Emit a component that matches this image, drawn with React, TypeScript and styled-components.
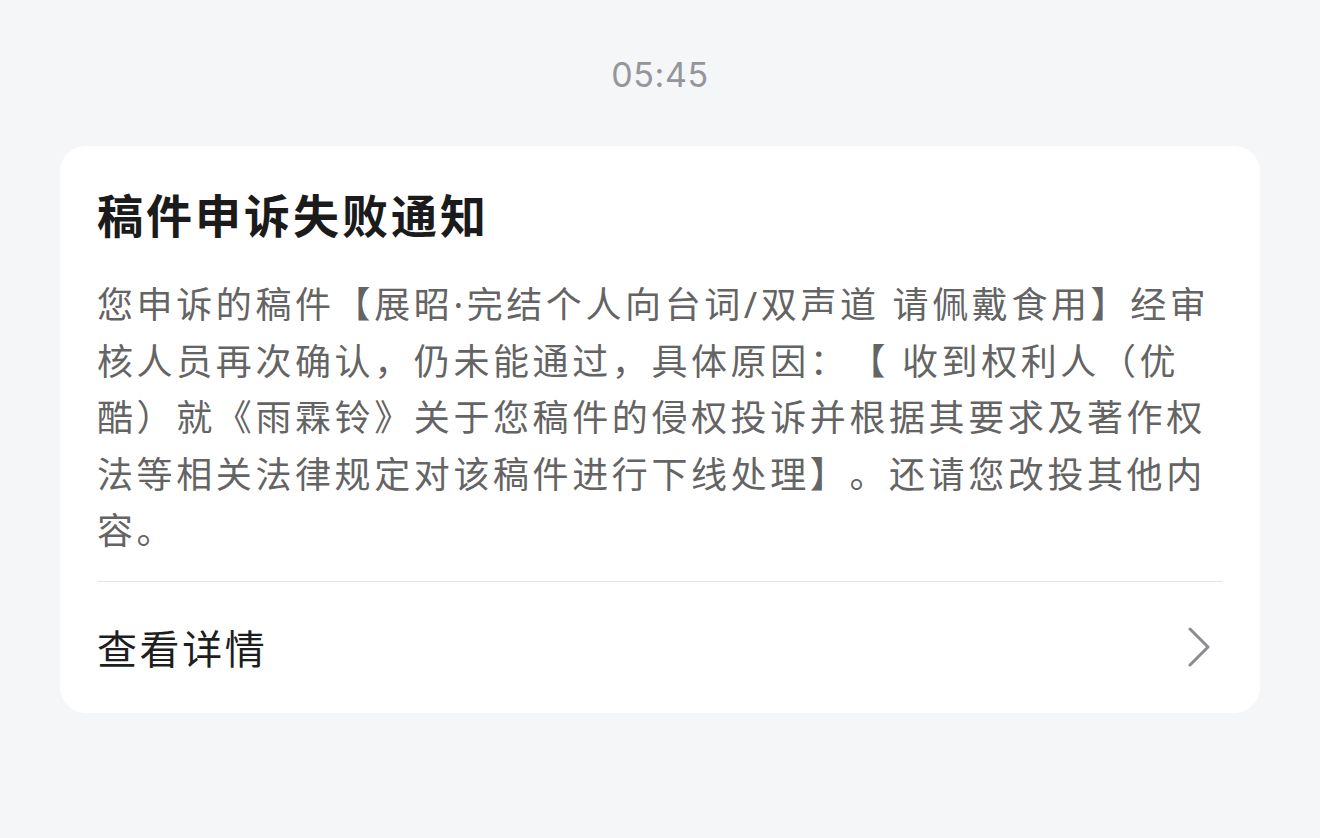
import React from "react";
import styled, { createGlobalStyle } from "styled-components";

const GlobalStyle = createGlobalStyle`
  html, body {
    margin: 0;
    padding: 0;
    background: #f5f6f8;
  }
  body {
    font-family: "Noto Sans", "Noto Sans CJK SC", sans-serif;
    text-spacing-trim: space-all;
  }
`;

const Page = styled.div`
  width: 1320px;
  height: 838px;
  box-sizing: border-box;
  padding: 0 60px;
  display: flex;
  flex-direction: column;
  align-items: stretch;
  background: #f5f6f8;
`;

const Time = styled.div`
  height: 146px;
  box-sizing: border-box;
  padding-top: 52px;
  text-align: center;
  font-family: Inter, "Noto Sans", sans-serif;
  font-size: 34px;
  line-height: 46px;
  color: #95959a;
  letter-spacing: 0.6px;
`;

const Card = styled.div`
  background: #ffffff;
  border-radius: 26px;
  padding: 37px 37px 0;
  display: flex;
  flex-direction: column;
`;

const Title = styled.h1`
  margin: 0;
  font-family: "Noto Sans CJK SC", sans-serif;
  font-size: 46px;
  line-height: 60px;
  font-weight: 700;
  letter-spacing: 3px;
  color: #1b1b1b;
`;

const Body = styled.p`
  margin: 34px 0 0;
  font-size: 36px;
  line-height: 56.5px;
  letter-spacing: 3.6px;
  color: #646464;
  text-spacing-trim: space-all;
`;

const Divider = styled.div`
  height: 1px;
  background: #e4e4e6;
  margin-top: 21px;
`;

const DetailRow = styled.div`
  height: 131px;
  display: flex;
  align-items: center;
  justify-content: space-between;
`;

const DetailText = styled.span`
  font-family: "Noto Sans CJK SC", sans-serif;
  font-size: 40px;
  letter-spacing: 2.6px;
  color: #1e1e1e;
`;

const Chevron = styled.svg`
  width: 24px;
  height: 40px;
  margin-right: 12px;
`;

export default function App() {
  return (
    <>
      <GlobalStyle />
      <Page>
        <Time>05:45</Time>
        <Card>
          <Title>稿件申诉失败通知</Title>
          <Body>
            您申诉的稿件【展昭·完结个人向台词/双声道 请佩戴食用】经审核人员再次确认，仍未能通过，具体原因：【 收到权利人（优酷）就《雨霖铃》关于您稿件的侵权投诉并根据其要求及著作权法等相关法律规定对该稿件进行下线处理】。还请您改投其他内容。
          </Body>
          <Divider />
          <DetailRow>
            <DetailText>查看详情</DetailText>
            <Chevron viewBox="0 0 24 40" fill="none">
              <path
                d="M3 2 L21 20 L3 38"
                stroke="#8c8c90"
                strokeWidth="3"
                strokeLinecap="round"
                strokeLinejoin="round"
              />
            </Chevron>
          </DetailRow>
        </Card>
      </Page>
    </>
  );
}
